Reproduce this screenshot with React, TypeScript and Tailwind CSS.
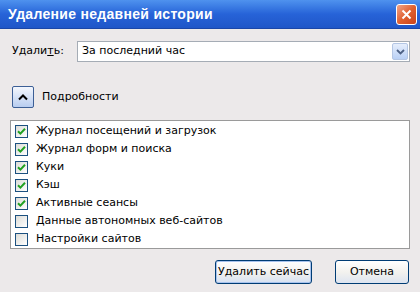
import { useState } from "react";

const items = [
  { label: "Журнал посещений и загрузок", checked: true },
  { label: "Журнал форм и поиска", checked: true },
  { label: "Куки", checked: true },
  { label: "Кэш", checked: true },
  { label: "Активные сеансы", checked: true },
  { label: "Данные автономных веб-сайтов", checked: false },
  { label: "Настройки сайтов", checked: false },
];

function CheckBox({ checked }: { checked: boolean }) {
  return (
    <span className="flex h-[13px] w-[13px] items-center justify-center border border-[#1c5180] bg-gradient-to-br from-[#dcdcd7] to-[#ffffff]">
      {checked && (
        <svg width="9" height="9" viewBox="0 0 9 9">
          <path d="M1 4.2 L3.4 6.6 L8 1.8" fill="none" stroke="#21a121" strokeWidth="2" />
        </svg>
      )}
    </span>
  );
}

export default function App() {
  const [rows, setRows] = useState(items);

  const toggle = (index: number) => {
    setRows(rows.map((row, i) => (i === index ? { ...row, checked: !row.checked } : row)));
  };

  return (
    <div className="flex h-[292px] w-[420px] flex-col bg-[#ece9ea] font-['DejaVu_Sans',sans-serif] text-[11px] text-black">

      {/* title bar */}
      <div className="flex h-[29px] items-center justify-between border-b border-[#1a46a8] bg-gradient-to-b from-[#4f92ee] via-[#2763d8] to-[#1f56c8] pl-[8px] pr-[3px]">
        <span className="font-['Liberation_Sans',sans-serif] text-[14px] font-bold tracking-[0.3px] text-white">
          Удаление недавней истории
        </span>
        <button className="flex h-[21px] w-[21px] items-center justify-center rounded-[3px] border border-white bg-gradient-to-br from-[#f0a487] via-[#e0602f] to-[#c9421b]">
          <svg width="11" height="11" viewBox="0 0 11 11">
            <path d="M1.5 1.5 L9.5 9.5 M9.5 1.5 L1.5 9.5" stroke="#ffffff" strokeWidth="2" />
          </svg>
        </button>
      </div>

      <div className="flex flex-1 flex-col px-[10px]">

        {/* period select */}
        <div className="mt-[12px] flex h-[21px] items-center pl-[2px]">
          <span className="w-[65px]">
            Удали<span className="underline">т</span>ь:
          </span>
          <div className="flex h-[21px] flex-1 items-center border border-[#a5acb5] bg-white pl-[4px]">
            <span className="flex-1">За последний час</span>
            <span className="mr-[1px] flex h-[17px] w-[16px] items-center justify-center rounded-[2px] border border-[#b4c6e4] bg-gradient-to-b from-[#e6eefc] to-[#b9d0f5]">
              <svg width="9" height="6" viewBox="0 0 9 6">
                <path d="M1 1 L4.5 4.5 L8 1" fill="none" stroke="#4d6185" strokeWidth="1.8" />
              </svg>
            </span>
          </div>
        </div>

        {/* details toggle */}
        <div className="mt-[24px] flex h-[22px] items-center pl-[2px]">
          <button className="flex h-[22px] w-[22px] items-center justify-center rounded-[2px] border border-[#3c5f96] bg-gradient-to-b from-[#f4f7fd] to-[#b8cdf0]">
            <svg width="10" height="7" viewBox="0 0 10 7">
              <path d="M1 5.5 L5 1.5 L9 5.5" fill="none" stroke="#000000" strokeWidth="2" />
            </svg>
          </button>
          <span className="ml-[8px]">
            По<span className="underline">д</span>робности
          </span>
        </div>

        {/* items list */}
        <div className="mt-[12px] flex h-[129px] flex-col border border-[#9a9a9a] bg-white pl-[4px] pt-[1px]">
          {rows.map((row, index) => (
            <div
              key={row.label}
              onClick={() => toggle(index)}
              className="flex h-[18px] items-center gap-[8px]"
            >
              <CheckBox checked={row.checked} />
              <span>{row.label}</span>
            </div>
          ))}
        </div>

        {/* actions */}
        <div className="mt-[11px] flex justify-end gap-[23px] pr-[1px]">
          <button className="h-[24px] w-[97px] whitespace-nowrap rounded-[3px] border border-[#003c74] bg-gradient-to-b from-[#ffffff] via-[#f3f2ee] to-[#d6e1f2] shadow-[inset_0_0_0_1px_#a8c3ed]">
            Удалить сейчас
          </button>
          <button className="h-[24px] w-[74px] whitespace-nowrap rounded-[3px] border border-[#003c74] bg-gradient-to-b from-[#ffffff] via-[#f3f2ee] to-[#dde4f0]">
            Отмена
          </button>
        </div>

      </div>

    </div>
  );
}
